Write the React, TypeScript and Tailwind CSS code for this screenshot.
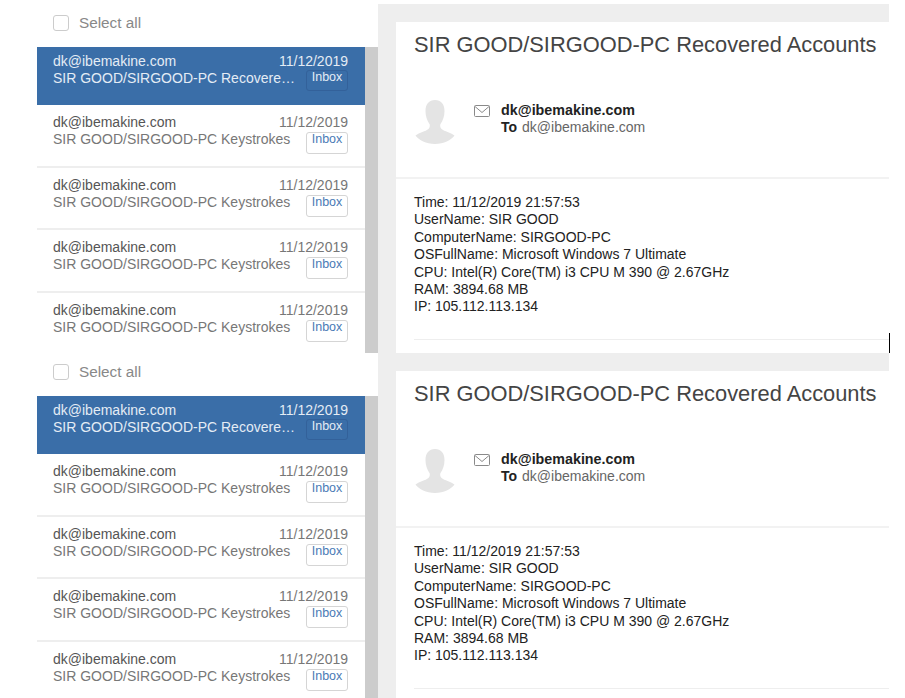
const details = [
  "Time: 11/12/2019 21:57:53",
  "UserName: SIR GOOD",
  "ComputerName: SIRGOOD-PC",
  "OSFullName: Microsoft Windows 7 Ultimate",
  "CPU: Intel(R) Core(TM) i3 CPU M 390 @ 2.67GHz",
  "RAM: 3894.68 MB",
  "IP: 105.112.113.134",
];

function MailRow({ active, subject }: { active?: boolean; subject: string }) {
  return (
    <div
      className={
        active
          ? "h-[58px] bg-[#3a6ea8] pl-4 pr-[17px] pt-[6px] text-[#e4ecf5]"
          : "h-[62.5px] border-b-2 border-[#eeeeee] bg-white pl-4 pr-[17px] pt-[9px] text-[#777777]"
      }
    >
      <div className="flex h-[17px] items-center justify-between text-sm leading-[17px]">
        <span className={active ? "" : "text-[#555555]"}>dk@ibemakine.com</span>
        <span>11/12/2019</span>
      </div>
      <div className="flex items-start justify-between text-sm leading-[17px]">
        <span className="w-[244px] truncate">{subject}</span>
        <span
          className={
            active
              ? "flex h-[21px] w-[42px] justify-center rounded-[3px] border border-[#33619a] text-[12.500px] leading-[13px] text-[#e4ecf5]"
              : "mt-px flex h-[22px] w-[42px] justify-center rounded-[3px] border border-[#d5d5d5] text-[12.500px] leading-[13px] text-[#4a7ab5]"
          }
        >
          Inbox
        </span>
      </div>
    </div>
  );
}

function Avatar() {
  return (
    <svg width="40" height="44" viewBox="0 0 40 44" className="shrink-0">
      <path
        d="M20 0c6 0 9.500 4 9.500 11 0 5-1.500 9.500-4 13-.6 1-.5 3.500 1 5 3 2.500 9 3.500 13 6.500C36 40 29 44 20 44S4 40 .5 35.500c4-3 10-4 13-6.500 1.500-1.500 1.600-4 1-5-2.500-3.500-4-8-4-13C10.500 4 14 0 20 0z"
        fill="#e4e4e4"
      />
    </svg>
  );
}

function MailIcon() {
  return (
    <svg width="16" height="12" viewBox="0 0 16 12" fill="none" stroke="#8a8a8a" className="shrink-0">
      <rect x="0.500" y="0.500" width="15" height="11" rx="1" />
      <path d="M1 1.500l7 6 7-6" />
    </svg>
  );
}

function Panel({ showCursor }: { showCursor?: boolean }) {
  return (
    <div className="relative flex h-[349px] w-[889px] shrink-0">
      <div className="flex w-[378px] shrink-0 flex-col bg-white pl-[37px]">
        <div className="flex h-[43px] shrink-0 items-center pb-[5px] pl-4">
          <span className="h-4 w-4 rounded-[3px] border border-[#cccccc] bg-white" />
          <span className="ml-[10px] text-[15.300px] text-[#888888]">Select all</span>
        </div>
        <div className="flex min-h-0 flex-1">
          <div className="w-[328px] shrink-0 overflow-hidden">
            <MailRow active subject="SIR GOOD/SIRGOOD-PC Recovered Accounts" />
            <MailRow subject="SIR GOOD/SIRGOOD-PC Keystrokes" />
            <MailRow subject="SIR GOOD/SIRGOOD-PC Keystrokes" />
            <MailRow subject="SIR GOOD/SIRGOOD-PC Keystrokes" />
            <MailRow subject="SIR GOOD/SIRGOOD-PC Keystrokes" />
          </div>
          <div className="w-[13px] bg-[#cccccc]" />
        </div>
      </div>
      <div className="min-w-0 flex-1 bg-[#eeeeee] pl-[18px] pt-[18px]">
        <div className="h-[331px] overflow-hidden bg-white">
          <h1 className="whitespace-nowrap pl-[18px] pt-[9px] text-[21.850px] leading-[28px] text-[#444444]">
            SIR GOOD/SIRGOOD-PC Recovered Accounts
          </h1>
          <div className="flex h-[120px] items-start border-b-2 border-[#f2f2f2] pl-[19px] pt-[41px]">
            <Avatar />
            <div className="ml-[19px] pt-[5px]">
              <MailIcon />
            </div>
            <div className="ml-[11px] pt-[2px] text-sm leading-[17px]">
              <div className="text-[14.300px] font-bold text-[#222222]">dk@ibemakine.com</div>
              <div className="text-[#666666]">
                <span className="mr-[5px] font-bold text-[#222222]">To</span>
                dk@ibemakine.com
              </div>
            </div>
          </div>
          <div className="ml-[18px] border-b border-[#eeeeee] pb-[23.500px] pt-[15px] text-sm leading-[17.400px] text-[#222222]">
            {details.map((line) => (
              <div key={line}>{line}</div>
            ))}
          </div>
        </div>
      </div>
      {showCursor && <div className="absolute bottom-0 left-[889px] h-5 w-px bg-black" />}
    </div>
  );
}

export default function App() {
  return (
    <div className="flex h-[698px] w-[905px] flex-col overflow-hidden bg-white pt-[4px] font-['Liberation_Sans',Arial,sans-serif]">
      <Panel showCursor />
      <Panel />
    </div>
  );
}
